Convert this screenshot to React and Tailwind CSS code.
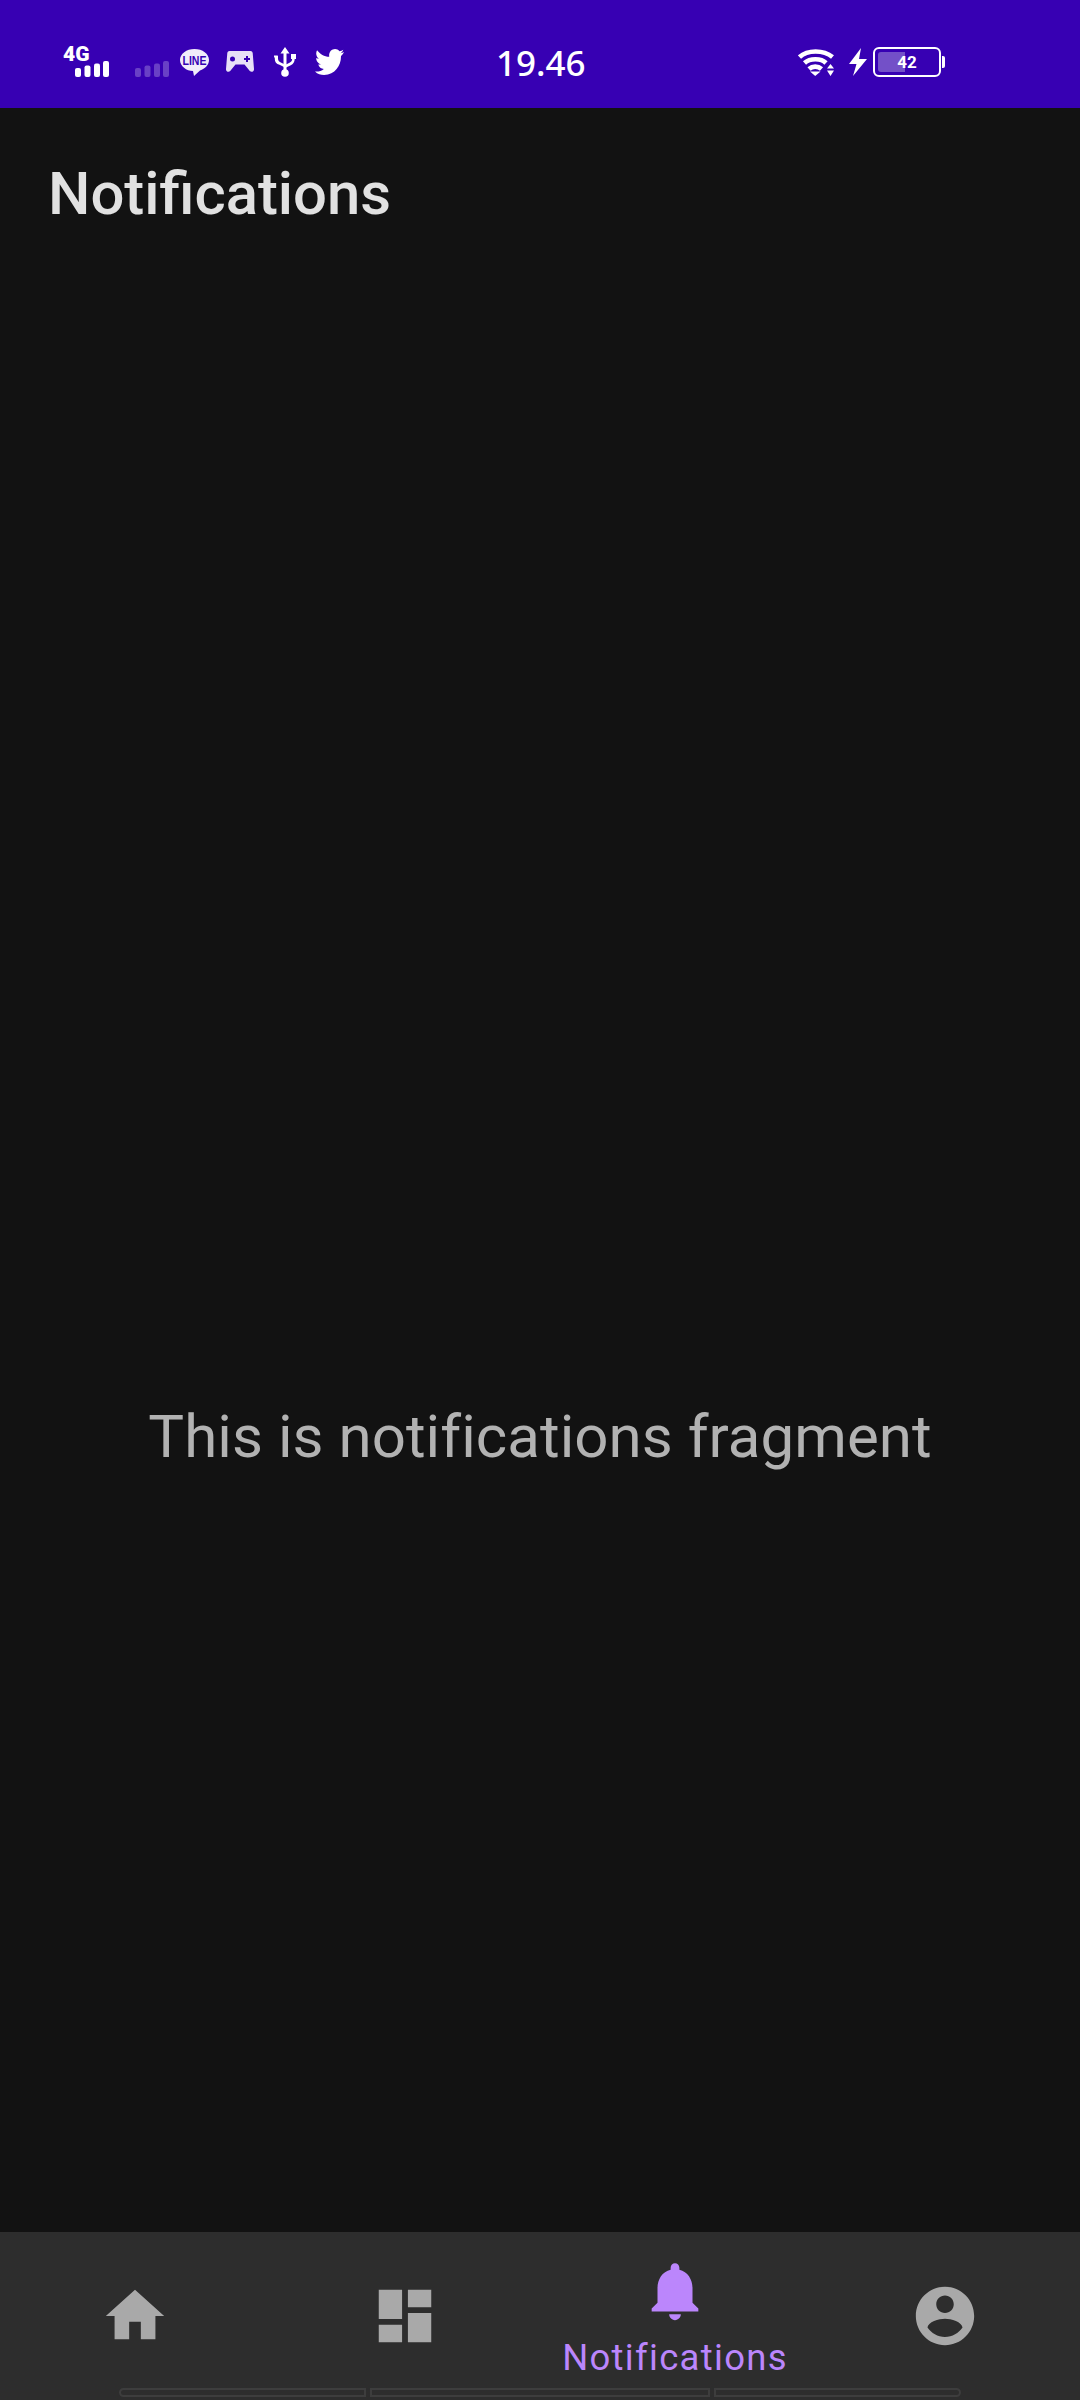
const roboto = "font-['Roboto',sans-serif]"

const Signal = ({ className, opacity = 1 }) => (
  <svg className={className} width="34" height="16" viewBox="0 0 34 16" fill="#fff" opacity={opacity}>
    <rect x="0" y="7" width="6" height="9" rx="2" />
    <rect x="9.500" y="4.500" width="6" height="11.500" rx="2" />
    <rect x="19" y="2.500" width="6" height="13.500" rx="2" />
    <rect x="28" y="0" width="6" height="16" rx="2" />
  </svg>
)

const LineIcon = () => (
  <svg width="29" height="27" viewBox="0 0 29 27">
    <path d="M14.500 0C6.500 0 0 4.800 0 11s6.500 11 13 11l1 5 6-5.600C25 19.700 29 15.900 29 11 29 4.800 22.500 0 14.500 0z" fill="#f1ecfa" />
    <text x="14.500" y="15.500" textAnchor="middle" fontSize="12" fontWeight="700" fill="#3700b3" fontFamily="Liberation Sans" textLength="24" lengthAdjust="spacingAndGlyphs">LINE</text>
  </svg>
)

const GameIcon = () => (
  <svg width="28" height="21" viewBox="0 0 28 21">
    <path d="M3.500 0h21c1.200 0 2 .8 2.200 2L28 18c.2 2.500-2.600 3.700-4.200 2l-5.300-6.500h-9L4.200 20C2.600 21.700-.2 20.500 0 18L1.300 2C1.500.8 2.300 0 3.500 0z" fill="#e8e0f7" />
    <circle cx="6.500" cy="8" r="2.500" fill="#3700b3" />
    <path d="M20 5h2v2h2v2h-2v2h-2V9h-2V7h2z" fill="#3700b3" />
  </svg>
)

const UsbIcon = () => (
  <svg width="22" height="30" viewBox="0 0 22 30" fill="#fff">
    <path d="M11 0l4.500 6.500h-3V24h-3V6.500h-3z" />
    <circle cx="11" cy="26" r="3.800" />
    <path d="M0 8.500h2a3 3 0 0 1 1.500 0v0l.5.5v2.500c0 2 1 3.200 2.800 4l3.700 1.800v3l-5-2.500C2.300 17 .8 14.900.8 12V11A2.800 2.800 0 0 1 0 8.500z" />
    <path d="M17 7h5v5h-1.300c0 3-1.500 5-3.900 6.200l-5.800 2.900v-3l4.500-2.300c1.800-.9 2.600-2 2.600-3.800H17z" />
  </svg>
)

const TwitterIcon = () => (
  <svg width="29" height="26" viewBox="0 0 24 20" preserveAspectRatio="none" fill="#fff">
    <path d="M24 2.400c-.9.400-1.800.7-2.800.8 1-.6 1.800-1.600 2.200-2.700-1 .6-2 1-3.100 1.200C19.300.7 18 0 16.600 0c-2.700 0-4.900 2.200-4.900 4.900 0 .4 0 .8.100 1.100C7.700 5.800 4.100 3.800 1.700.9 1.300 1.600 1 2.500 1 3.400c0 1.700.9 3.200 2.200 4.100-.8 0-1.600-.2-2.200-.6v.1c0 2.400 1.700 4.400 3.900 4.800-.4.100-.8.200-1.300.2-.3 0-.6 0-.9-.1.600 2 2.400 3.400 4.600 3.400-1.700 1.300-3.800 2.100-6.100 2.100-.4 0-.8 0-1.200-.1C2.200 19.300 4.800 20 7.500 20c9.100 0 14-7.500 14-14v-.6c1-.7 1.800-1.600 2.500-3z" />
  </svg>
)

const WifiIcon = () => (
  <svg width="37" height="27" viewBox="0 0 37 27" fill="none" stroke="#fff" strokeWidth="4.600">
    <path d="M1.500 8C9.500 .6 25.500 .6 34.500 8" />
    <path d="M6.500 14C12 9 23 9 28 14" />
    <path d="M11 20C14.500 16.800 20 16.800 23.500 20" />
    <path d="M12 22.500h10.500L17.200 27z" fill="#fff" stroke="none" />
    <path d="M32.500 15l3.500 4.500h-7zM32.500 27l3.500-5.500h-7z" fill="#fff" stroke="none" />
  </svg>
)

const BoltIcon = () => (
  <svg width="18" height="28" viewBox="0 0 18 28" fill="#fff">
    <path d="M12 0L0 16h7.500L4 28 18 11h-8z" />
  </svg>
)

const Battery = () => (
  <div className="flex items-center">
    <div className="relative flex h-[30px] w-[68px] items-center justify-center rounded-[6px] border-2 border-white">
      <div className="absolute left-[3px] top-[3px] h-[20px] w-[27px] rounded-l-[3px] bg-[#7350c8]" />
      <span className={`relative text-[17px] font-bold leading-none text-white ${roboto}`}>42</span>
    </div>
    <div className="ml-[1px] h-[12px] w-[3px] rounded-r-[2px] bg-white" />
  </div>
)

const StatusBar = () => (
  <div className="flex h-[108px] shrink-0 items-start bg-[#3700b3] pl-[63px]">
    <div className="mt-[47px] w-[46px] shrink-0">
      <div className={`h-[14px] text-[21px] font-black leading-[14px] text-white ${roboto}`}>4G</div>
      <Signal className="ml-[12px]" />
    </div>
    <Signal className="mt-[61px] ml-[26px]" opacity={0.25} />
    <div className="ml-[11px] mt-[49px]"><LineIcon /></div>
    <div className="ml-[17px] mt-[51px]"><GameIcon /></div>
    <div className="ml-[20px] mt-[47px]"><UsbIcon /></div>
    <div className="ml-[19px] mt-[49px]"><TwitterIcon /></div>
    <div className="ml-[152px] mt-[41px] w-[91px] font-['Noto_Sans',sans-serif] text-[35px] font-medium leading-[44px] text-white">19.46</div>
    <div className="ml-[211px] mt-[49px]"><WifiIcon /></div>
    <div className="ml-[14px] mt-[48px]"><BoltIcon /></div>
    <div className="ml-[6px] mt-[47px]"><Battery /></div>
  </div>
)

const NavIcon = ({ d, color = '#a9a9a9' }) => (
  <svg width="70" height="70" viewBox="0 0 24 24" fill={color}>
    <path d={d} />
  </svg>
)

const HOME = 'M10 20v-6h4v6h5v-8h3L12 3 2 12h3v8z'
const DASHBOARD = 'M3 13h8V3H3v10zm0 8h8v-6H3v6zm10 0h8V11h-8v10zm0-18v6h8V3h-8z'
const BELL = 'M12 22c1.100 0 2-.9 2-2h-4c0 1.100.89 2 2 2zm6-6v-5c0-3.070-1.640-5.640-4.500-6.320V4c0-.83-.67-1.500-1.500-1.500s-1.500.67-1.500 1.500v.68C7.630 5.360 6 7.920 6 11v5l-2 2v1h16v-1l-2-2z'
const ACCOUNT = 'M12 2C6.480 2 2 6.480 2 12s4.480 10 10 10 10-4.480 10-10S17.520 2 12 2zm0 3c1.660 0 3 1.340 3 3s-1.340 3-3 3-3-1.340-3-3 1.340-3 3-3zm0 14.200c-2.500 0-4.710-1.280-6-3.220.03-1.990 4-3.080 6-3.080 1.990 0 5.970 1.090 6 3.080-1.290 1.940-3.500 3.220-6 3.220z'

const BottomNav = () => (
  <div className="flex h-[168px] shrink-0 flex-col bg-[#2d2d2d]">
    <div className="grid h-[156px] grid-cols-4">
      <div className="flex justify-center pt-[49px]"><NavIcon d={HOME} /></div>
      <div className="flex justify-center pt-[49px]"><NavIcon d={DASHBOARD} /></div>
      <div className="flex flex-col items-center pt-[24px]">
        <NavIcon d={BELL} color="#bb86fc" />
        <span className={`mt-[10px] text-[36.500px] leading-[44px] tracking-[1.3px] text-[#bb86fc] ${roboto}`}>Notifications</span>
      </div>
      <div className="flex justify-center pt-[49px]"><NavIcon d={ACCOUNT} /></div>
    </div>
    <div className="flex gap-[4px] pl-[119px]">
      <div className="h-[9px] w-[247px] rounded-l-[5px] border-2 border-[#3d3d3d]" />
      <div className="h-[9px] w-[340px] border-2 border-[#3d3d3d]" />
      <div className="h-[9px] w-[247px] rounded-r-[5px] border-2 border-[#3d3d3d]" />
    </div>
  </div>
)

export default function App() {
  return (
    <div className="flex h-[2400px] w-[1080px] flex-col overflow-hidden bg-[#121212]">
      <StatusBar />
      <main className="flex-1">
        <h1 className={`pl-[48px] pt-[51px] text-[59.800px] font-medium leading-[70px] text-[#e1e1e1] ${roboto}`}>Notifications</h1>
        <p className={`mt-[1174px] text-center text-[60px] leading-[68px] tracking-[0.05px] text-[#b2b2b2] ${roboto}`}>This is notifications fragment</p>
      </main>
      <BottomNav />
    </div>
  )
}
